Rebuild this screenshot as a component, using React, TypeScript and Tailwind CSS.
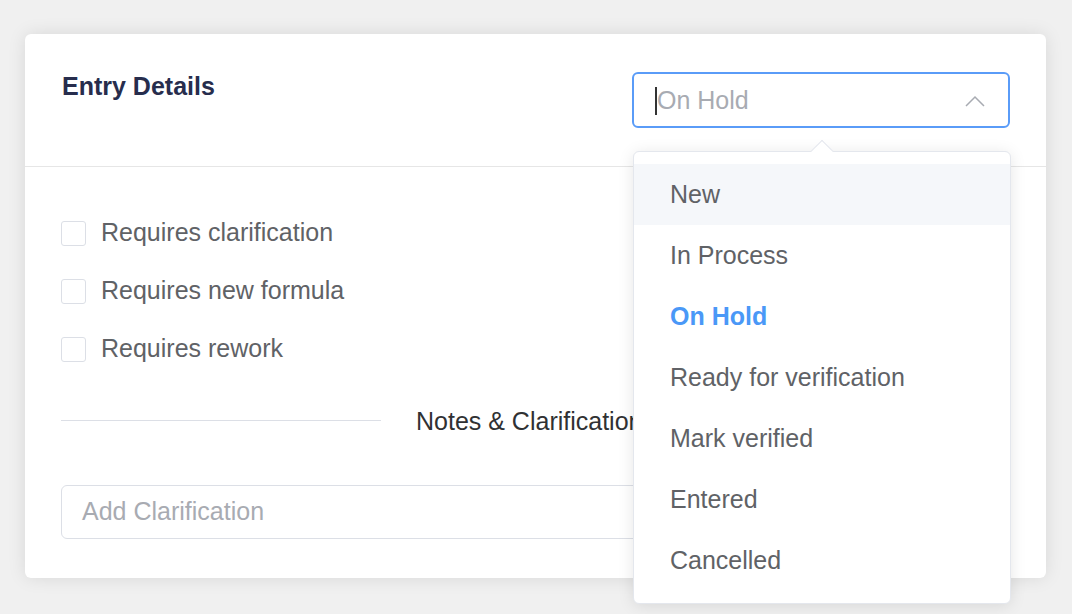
import { useState } from 'react'

const statuses = [
  'New',
  'In Process',
  'On Hold',
  'Ready for verification',
  'Mark verified',
  'Entered',
  'Cancelled',
]

const flags = ['Requires clarification', 'Requires new formula', 'Requires rework']

function Caret() {
  return (
    <svg width="20" height="12" viewBox="0 0 20 12" fill="none">
      <polyline points="1,11 10,2 19,11" stroke="#a8abb2" strokeWidth="1.5" />
    </svg>
  )
}

function StatusSelect() {
  const [value] = useState('On Hold')
  return (
    <div className="relative w-[378px]">
      <div className="flex h-[56px] items-center rounded-[6px] border-2 border-[#5a9cf8] pl-[21px] pr-[23px] pt-[2px]">
        <span className="h-[28px] w-[2px] bg-[#333]" />
        <span className="flex-1 text-[25px] text-[#a8abb2]">{value}</span>
        <Caret />
      </div>

      <div className="absolute left-px top-[79px] z-10 w-full rounded-[6px] border border-[#e4e7ed] bg-white py-3 shadow-[0_2px_16px_rgba(0,0,0,0.1)]">
        <div className="absolute -top-[9px] left-1/2 h-[16px] w-[16px] -translate-x-1/2 rotate-45 border-l border-t border-[#e4e7ed] bg-white" />
        {statuses.map((s, i) => (
          <div
            key={s}
            className={
              'relative flex h-[61px] items-center pl-[36px] text-[25px] ' +
              (i === 0 ? 'bg-[#f5f7fa] ' : '') +
              (s === value ? 'font-bold text-[#4a98f7]' : 'text-[#606266]')
            }
          >
            {s}
          </div>
        ))}
      </div>
    </div>
  )
}

export default function App() {
  return (
    <div className="h-[614px] w-[1072px] overflow-hidden bg-[#f0f0f0] pl-[25px] pt-[34px] font-['Liberation_Sans',Arial,sans-serif]">
      <div className="w-[1021px] rounded-[6px] bg-white shadow-[0_0_18px_rgba(0,0,0,0.1)]">
        <div className="flex items-start justify-between border-b border-[#e6e6e6] px-[36px] py-[38px]">
          <h1 className="pl-px text-[25px] font-bold leading-[28px] text-[#272d4d]">Entry Details</h1>
          <StatusSelect />
        </div>

        <div className="px-[36px] pb-[39px] pt-[37px]">
          {flags.map((f) => (
            <label key={f} className="flex h-[58px] items-center gap-[15px]">
              <span className="h-[25px] w-[25px] rounded-[3px] border border-[#dcdfe6] bg-white" />
              <span className="text-[25px] text-[#606266]">{f}</span>
            </label>
          ))}

          <div className="mt-[27px] flex h-[30px] items-center">
            <div className="h-px w-[320px] bg-[#dcdfe6]" />
            <span className="px-[35px] pt-[3px] text-[25px] text-[#303133]">Notes &amp; Clarification</span>
            <div className="h-px flex-1 bg-[#dcdfe6]" />
          </div>

          <div className="mt-[50px] flex h-[54px] items-center rounded-[6px] border border-[#dcdfe6] px-[20px]">
            <span className="text-[25px] text-[#a8abb2]">Add Clarification</span>
          </div>
        </div>
      </div>
    </div>
  )
}
